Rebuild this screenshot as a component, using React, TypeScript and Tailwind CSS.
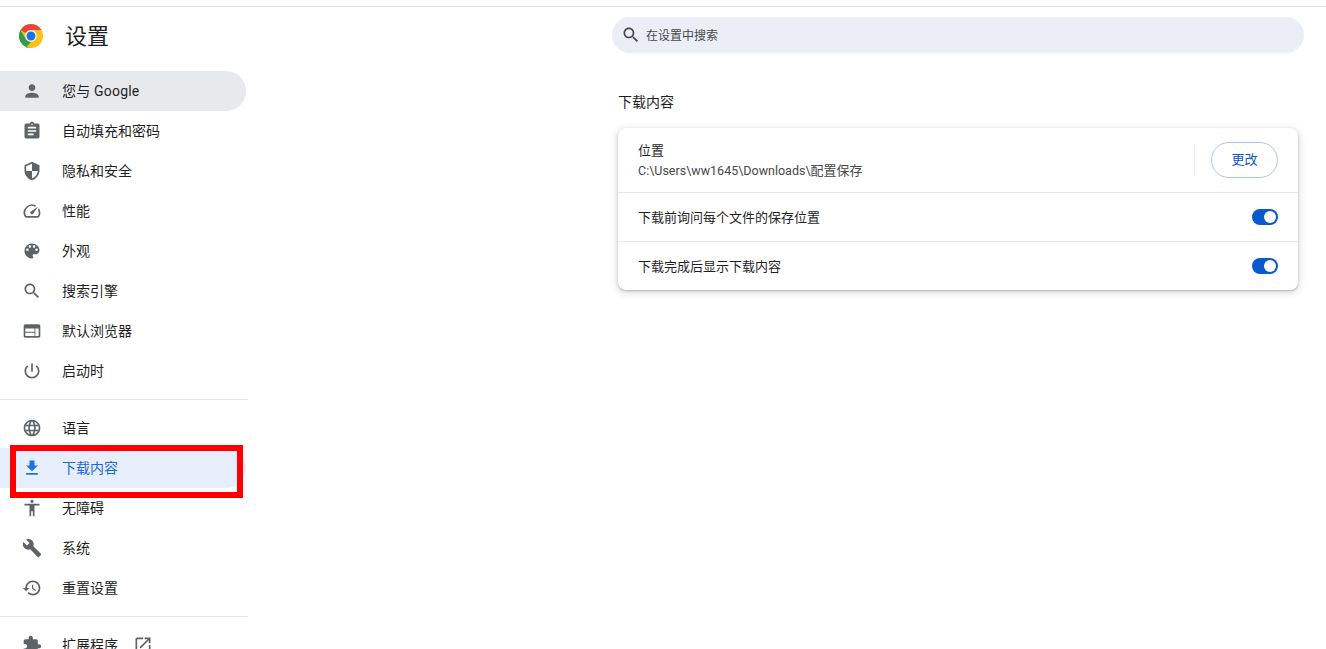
import type { ReactNode } from "react";

const ICONS: Record<string, string> = {
  person: "M12 12c2.21 0 4-1.79 4-4s-1.79-4-4-4-4 1.79-4 4 1.79 4 4 4zm0 2c-2.67 0-8 1.34-8 4v2h16v-2c0-2.66-5.33-4-8-4z",
  assignment: "M19 3h-4.18C14.4 1.84 13.3 1 12 1c-1.3 0-2.4.84-2.82 2H5c-1.1 0-2 .9-2 2v14c0 1.1.9 2 2 2h14c1.1 0 2-.9 2-2V5c0-1.1-.9-2-2-2zm-7 0c.55 0 1 .45 1 1s-.45 1-1 1-1-.45-1-1 .45-1 1-1zm2 14H7v-2h7v2zm3-4H7v-2h10v2zm0-4H7V7h10v2z",
  security: "M12 1L3 5v6c0 5.55 3.84 10.74 9 12 5.16-1.26 9-6.45 9-12V5l-9-4zm0 10.99h7c-.53 4.12-3.28 7.79-7 8.94V12H5V6.3l7-3.11v8.8z",
  speed: "M20.38 8.57l-1.23 1.85a8 8 0 0 1-.22 7.58H5.07A8 8 0 0 1 15.58 6.85l1.85-1.23A10 10 0 0 0 3.35 19a2 2 0 0 0 1.72 1h13.85a2 2 0 0 0 1.74-1 10 10 0 0 0-.27-10.44zm-9.79 6.84a2 2 0 0 0 2.83 0l5.66-8.49-8.49 5.66a2 2 0 0 0 0 2.83z",
  palette: "M12 3c-4.97 0-9 4.03-9 9s4.03 9 9 9c.83 0 1.5-.67 1.5-1.5 0-.39-.15-.74-.39-1.01-.23-.26-.38-.61-.38-.99 0-.83.67-1.5 1.5-1.5H16c2.76 0 5-2.24 5-5 0-4.42-4.03-8-9-8zm-5.5 9c-.83 0-1.5-.67-1.5-1.5S5.67 9 6.5 9 8 9.67 8 10.5 7.33 12 6.5 12zm3-4C8.67 8 8 7.33 8 6.5S8.67 5 9.5 5s1.5.67 1.5 1.5S10.33 8 9.5 8zm5 0c-.83 0-1.5-.67-1.5-1.5S13.67 5 14.5 5s1.5.67 1.5 1.5S15.33 8 14.5 8zm3 4c-.83 0-1.5-.67-1.5-1.5S16.67 9 17.5 9s1.5.67 1.5 1.5-.67 1.5-1.5 1.5z",
  search: "M15.5 14h-.79l-.28-.27C15.41 12.59 16 11.11 16 9.5 16 5.91 13.09 3 9.5 3S3 5.91 3 9.5 5.91 16 9.5 16c1.61 0 3.09-.59 4.23-1.57l.27.28v.79l5 4.99L20.49 19l-4.99-5zm-6 0C7.01 14 5 11.99 5 9.5S7.01 5 9.5 5 14 7.01 14 9.5 11.99 14 9.5 14z",
  web: "M20 4H4c-1.1 0-1.99.9-1.99 2L2 18c0 1.1.9 2 2 2h16c1.1 0 2-.9 2-2V6c0-1.1-.9-2-2-2zm-5 14H4v-4h11v4zm0-5H4V9h11v4zm5 5h-4V9h4v9z",
  power: "M13 3h-2v10h2V3zm4.83 2.17l-1.42 1.42C17.99 7.86 19 9.81 19 12c0 3.87-3.13 7-7 7s-7-3.13-7-7c0-2.19 1.01-4.14 2.58-5.42L6.17 5.17C4.23 6.82 3 9.26 3 12c0 4.97 4.03 9 9 9s9-4.03 9-9c0-2.74-1.23-5.18-3.17-6.83z",
  language: "M11.99 2C6.47 2 2 6.48 2 12s4.47 10 9.99 10C17.52 22 22 17.52 22 12S17.52 2 11.99 2zm6.93 6h-2.95c-.32-1.25-.78-2.45-1.38-3.56 1.84.63 3.37 1.91 4.33 3.56zM12 4.04c.83 1.2 1.48 2.53 1.91 3.96h-3.82c.43-1.43 1.08-2.76 1.91-3.96zM4.26 14C4.1 13.36 4 12.69 4 12s.1-1.36.26-2h3.38c-.08.66-.14 1.32-.14 2 0 .68.06 1.34.14 2H4.26zm.82 2h2.95c.32 1.25.78 2.45 1.38 3.56-1.84-.63-3.37-1.9-4.33-3.56zm2.95-8H5.08c.96-1.66 2.49-2.93 4.33-3.56C8.81 5.55 8.35 6.75 8.03 8zM12 19.96c-.83-1.2-1.48-2.53-1.91-3.96h3.82c-.43 1.43-1.08 2.76-1.91 3.96zM14.34 14H9.66c-.09-.66-.16-1.32-.16-2 0-.68.07-1.35.16-2h4.68c.09.65.16 1.32.16 2 0 .68-.07 1.34-.16 2zm.25 5.56c.6-1.11 1.06-2.31 1.38-3.56h2.95c-.96 1.65-2.49 2.93-4.33 3.56zM16.36 14c.08-.66.14-1.32.14-2 0-.68-.06-1.34-.14-2h3.38c.16.64.26 1.31.26 2s-.1 1.36-.26 2h-3.38z",
  download: "M19 9h-4V3H9v6H5l7 7 7-7zM5 18v2h14v-2H5z",
  accessibility: "M12 2c1.1 0 2 .9 2 2s-.9 2-2 2-2-.9-2-2 .9-2 2-2zm9 7h-6v13h-2v-6h-2v6H9V9H3V7h18v2z",
  build: "M22.7 19l-9.1-9.1c.9-2.3.4-5-1.5-6.9-2-2-5-2.4-7.4-1.3L9 6 6 9 1.6 4.7C.4 7.1.9 10.1 2.9 12.1c1.9 1.9 4.6 2.4 6.9 1.5l9.1 9.1c.4.4 1 .4 1.4 0l2.3-2.3c.5-.4.5-1.1.1-1.4z",
  restore: "M13 3c-4.97 0-9 4.03-9 9H1l3.89 3.89.07.14L9 12H6c0-3.87 3.13-7 7-7s7 3.13 7 7-3.13 7-7 7c-1.93 0-3.68-.79-4.94-2.06l-1.42 1.42C8.27 19.99 10.51 21 13 21c4.97 0 9-4.03 9-9s-4.03-9-9-9zm-1 5v5l4.28 2.54.72-1.21-3.5-2.08V8H12z",
  extension: "M20.5 11H19V7c0-1.1-.9-2-2-2h-4V3.5C13 2.12 11.88 1 10.5 1S8 2.12 8 3.5V5H4c-1.1 0-1.99.9-1.99 2v3.8H3.5c1.49 0 2.7 1.21 2.7 2.7s-1.21 2.7-2.7 2.7H2V20c0 1.1.9 2 2 2h3.8v-1.5c0-1.49 1.21-2.7 2.7-2.7 1.49 0 2.7 1.21 2.7 2.7V22H17c1.1 0 2-.9 2-2v-4h1.5c1.38 0 2.5-1.12 2.5-2.5S21.88 11 20.5 11z",
  open: "M19 19H5V5h7V3H5c-1.11 0-2 .9-2 2v14c0 1.1.89 2 2 2h14c1.1 0 2-.9 2-2v-7h-2v7zM14 3v2h3.59l-9.83 9.83 1.41 1.41L19 6.41V10h2V3h-7z",
};

function Icon({ name, className }: { name: string; className: string }) {
  return (
    <svg viewBox="0 0 24 24" fill="currentColor" className={className}>
      <path d={ICONS[name]} />
    </svg>
  );
}

function ChromeLogo() {
  return (
    <svg viewBox="0 0 48 48" className="h-6 w-6 shrink-0">
      <circle cx="24" cy="24" r="24" fill="#fbc116" />
      <path d="M24 0a24 24 0 0 1 20.8 12H24a12 12 0 0 0-10.4 6L3.2 12A24 24 0 0 1 24 0z" fill="#e8453c" />
      <path d="M3.2 12l10.4 18A12 12 0 0 0 24 36L13.6 47.6 24 48A24 24 0 0 1 3.2 12z" fill="#2e9e4f" />
      <circle cx="24" cy="24" r="11.5" fill="#ffffff" />
      <circle cx="24" cy="24" r="9" fill="#1a73e8" />
    </svg>
  );
}

function NavItem({ icon, label, state, children }: { icon: string; label: string; state?: "grey" | "blue"; children?: ReactNode }) {
  const bg = state === "grey" ? "bg-[#e8e9ed] tracking-[0.2px]" : state === "blue" ? "bg-[#e7eefb] text-[#1a68d8]" : "";
  const iconColor = state === "blue" ? "text-[#1a73e8]" : "text-[#5f6368]";
  return (
    <div className={`relative flex h-10 w-[246px] shrink-0 items-center rounded-r-full pl-[22px] text-sm ${bg}`}>
      <Icon name={icon} className={`h-5 w-5 shrink-0 ${iconColor}`} />
      <span className="ml-5">{label}</span>
      {children}
    </div>
  );
}

function Toggle() {
  return (
    <div className="flex h-4 w-[26px] items-center justify-end rounded-full bg-[#0b57d0] pr-[2px]">
      <div className="h-3 w-3 rounded-full bg-white" />
    </div>
  );
}

export default function App() {
  return (
    <div className="h-[649px] overflow-hidden bg-white text-[#1f1f1f] font-['Roboto','Noto_Sans_CJK_SC',sans-serif]">
      <div className="mt-[6px] h-px bg-[#e3e3e3]" />
      <div className="flex">
        <aside className="flex w-[248px] shrink-0 flex-col">
          <div className="flex h-[64px] items-center pb-[6px] pl-[19px]">
            <ChromeLogo />
            <h1 className="ml-[22px] text-[22px] font-normal">设置</h1>
          </div>
          <NavItem icon="person" label="您与 Google" state="grey" />
          <NavItem icon="assignment" label="自动填充和密码" />
          <NavItem icon="security" label="隐私和安全" />
          <NavItem icon="speed" label="性能" />
          <NavItem icon="palette" label="外观" />
          <NavItem icon="search" label="搜索引擎" />
          <NavItem icon="web" label="默认浏览器" />
          <NavItem icon="power" label="启动时" />
          <div className="my-2 h-px bg-[#e8e8e8]" />
          <NavItem icon="language" label="语言" />
          <NavItem icon="download" label="下载内容" state="blue">
            <div className="absolute left-[10px] top-[-3px] h-[53px] w-[233px] border-[6px] border-[#ff0000]" />
          </NavItem>
          <NavItem icon="accessibility" label="无障碍" />
          <NavItem icon="build" label="系统" />
          <NavItem icon="restore" label="重置设置" />
          <div className="my-2 h-px bg-[#e8e8e8]" />
          <NavItem icon="extension" label="扩展程序">
            <Icon name="open" className="ml-[15px] h-5 w-5 text-[#5f6368]" />
          </NavItem>
        </aside>
        <main className="ml-[364px] w-[692px] pt-[10px]">
          <div className="flex h-9 items-center rounded-full bg-[#ebeef7] pl-[9px] text-xs text-[#474747]">
            <Icon name="search" className="h-5 w-5 text-[#474747]" />
            <span className="ml-[5px] pt-px">在设置中搜索</span>
          </div>
          <h2 className="ml-[6px] mt-[39px] text-sm font-normal leading-5">下载内容</h2>
          <section className="ml-[6px] mt-4 w-[680px] rounded-lg bg-white shadow-[0_1px_2px_rgba(60,64,67,0.3),0_2px_6px_2px_rgba(60,64,67,0.15)]">
            <div className="flex h-16 items-center pl-5 pr-5">
              <div className="flex-1 pt-[2px]">
                <div className="text-[13px] leading-5">位置</div>
                <div className="text-[13px] leading-5 text-[#474747]">
                  <span className="text-[12.5px]">C:\Users\ww1645\Downloads\</span>配置保存
                </div>
              </div>
              <div className="h-8 w-px bg-[#e8e8e8]" />
              <button className="ml-4 h-9 w-[67px] rounded-full border border-[#a8c7fa] text-[13px] text-[#0b57d0]">更改</button>
            </div>
            <div className="flex h-[49px] items-center justify-between border-t border-[#e8e8e8] px-5 text-[13px]">
              <span className="block pt-[2px]">下载前询问每个文件的保存位置</span>
              <Toggle />
            </div>
            <div className="flex h-[49px] items-center justify-between border-t border-[#e8e8e8] px-5 text-[13px]">
              <span className="block pt-[2px]">下载完成后显示下载内容</span>
              <Toggle />
            </div>
          </section>
        </main>
      </div>
    </div>
  );
}
